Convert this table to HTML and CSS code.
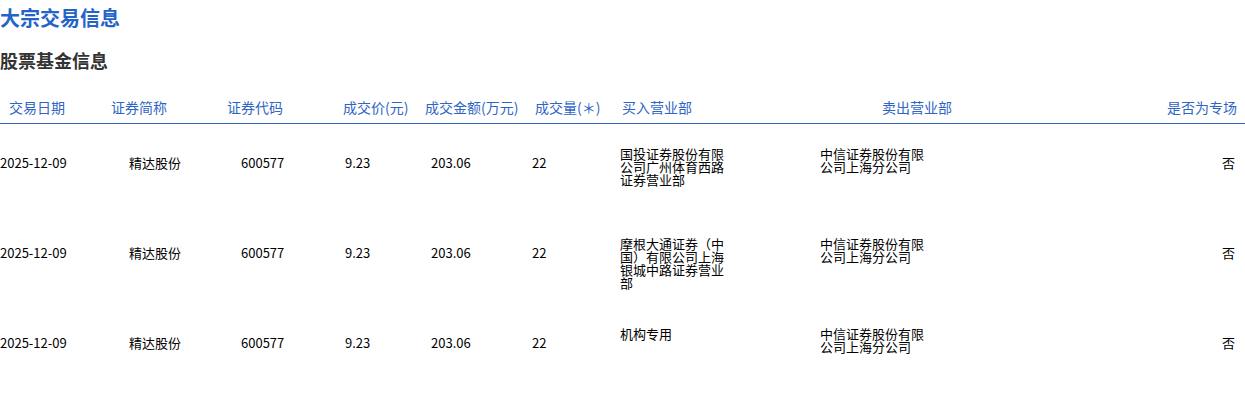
FILE: index.html
```html
<!DOCTYPE html>
<html lang="zh-CN">
<head>
<meta charset="utf-8">
<title>大宗交易信息</title>
<link rel="stylesheet" href="styles.css">
</head>
<body>
<h1 class="title">大宗交易信息</h1>
<h2 class="subtitle">股票基金信息</h2>
<div class="table">
  <div class="row head">
    <div class="c1">交易日期</div>
    <div class="c2">证券简称</div>
    <div class="c3">证券代码</div>
    <div class="c4">成交价(元)</div>
    <div class="c5">成交金额(万元)</div>
    <div class="c6">成交量(＊)</div>
    <div class="c7">买入营业部</div>
    <div class="c8">卖出营业部</div>
    <div class="c9">是否为专场</div>
  </div>
  <div class="row data">
    <div class="c1">2025-12-09</div>
    <div class="c2">精达股份</div>
    <div class="c3">600577</div>
    <div class="c4">9.23</div>
    <div class="c5">203.06</div>
    <div class="c6">22</div>
    <div class="c7 dept"><span>国投证券股份有限公司广州体育西路证券营业部</span></div>
    <div class="c8 dept"><span>中信证券股份有限公司上海分公司</span></div>
    <div class="c9">否</div>
  </div>
  <div class="row data">
    <div class="c1">2025-12-09</div>
    <div class="c2">精达股份</div>
    <div class="c3">600577</div>
    <div class="c4">9.23</div>
    <div class="c5">203.06</div>
    <div class="c6">22</div>
    <div class="c7 dept"><span>摩根大通证券（中国）有限公司上海银城中路证券营业部</span></div>
    <div class="c8 dept"><span>中信证券股份有限公司上海分公司</span></div>
    <div class="c9">否</div>
  </div>
  <div class="row data">
    <div class="c1">2025-12-09</div>
    <div class="c2">精达股份</div>
    <div class="c3">600577</div>
    <div class="c4">9.23</div>
    <div class="c5">203.06</div>
    <div class="c6">22</div>
    <div class="c7 dept"><span>机构专用</span></div>
    <div class="c8 dept"><span>中信证券股份有限公司上海分公司</span></div>
    <div class="c9">否</div>
  </div>
</div>
</body>
</html>
```

FILE: styles.css
```css
* { box-sizing: border-box; }
html, body { margin: 0; padding: 0; background: #fff; }
body {
  font-family: "Noto Sans CJK SC", "Noto Sans", sans-serif;
  color: #000;
  width: 1245px;
}
.title {
  margin: 0;
  font-size: 20px;
  line-height: 36px;
  font-weight: 700;
  color: #2463c8;
}
.subtitle {
  margin: 11px 0 0 0;
  font-size: 18px;
  line-height: 26px;
  font-weight: 700;
  color: #333;
}
.row {
  display: grid;
  grid-template-columns: 100px 115px 115px 90px 105px 87px 198px 290px 145px;
}
.head {
  height: 51px;
  align-items: end;
  padding-bottom: 6px;
  border-bottom: 1px solid #3366bb;
  font-size: 14px;
  line-height: 20px;
  color: #2f66c4;
  white-space: nowrap;
}
.head .c1 { padding-left: 9px; }
.head .c2 { padding-left: 11px; }
.head .c3 { padding-left: 12px; }
.head .c4 { padding-left: 13px; }
.head .c5 { padding-left: 5px; }
.head .c6 { padding-left: 10px; }
.head .c7 { padding-left: 10px; }
.head .c8 { padding-left: 72px; }
.head .c9 { text-align: right; padding-right: 8px; }

.data {
  height: 90px;
  padding-bottom: 13px;
  align-items: center;
  font-size: 13px;
  line-height: 18px;
  white-space: nowrap;
}
.data .c1 { padding-left: 0; }
.data .c2 { padding-left: 29px; }
.data .c3 { padding-left: 26px; }
.data .c4 { padding-left: 15px; }
.data .c5 { padding-left: 11px; }
.data .c6 { padding-left: 7px; }
.data .c7 { padding-left: 8px; }
.data .c8 { padding-left: 10px; }
.data .c9 { text-align: right; padding-right: 10px; }
.data .dept {
  align-self: start;
  padding-top: 23px;
  white-space: normal;
  line-height: 13px;
}
.data .dept span {
  display: block;
  width: 104px;
}
```
